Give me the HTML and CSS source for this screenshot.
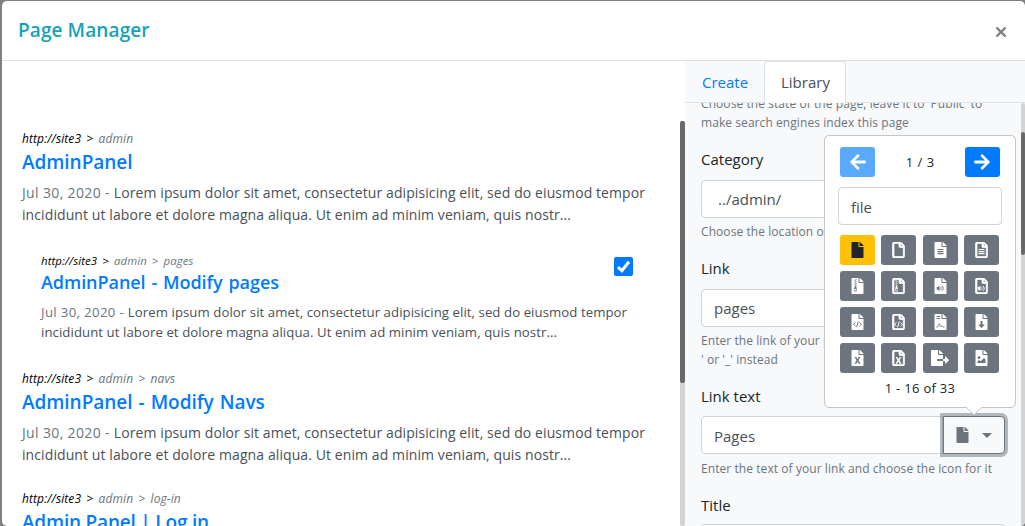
FILE: index.html
```html
<!DOCTYPE html>
<html lang="en">
<head>
<meta charset="utf-8">
<title>Page Manager</title>
<link rel="stylesheet" href="styles.css">
</head>
<body>
<svg class="defs" aria-hidden="true">
  <symbol id="file" viewBox="0 0 384 512"><path d="M224 136V0H24C10.7 0 0 10.7 0 24v464c0 13.3 10.7 24 24 24h336c13.3 0 24-10.7 24-24V160H248c-13.2 0-24-10.8-24-24zm160-14.1v6.1H256V0h6.1c6.4 0 12.5 2.5 17 7l97.9 98c4.5 4.5 7 10.6 7 16.9z"/></symbol>
  <symbol id="file-o" viewBox="0 0 384 512"><path class="bold" d="M369.9 97.9L286 14C277 5 264.8-.1 252.1-.1H48C21.5 0 0 21.5 0 48v416c0 26.5 21.5 48 48 48h288c26.5 0 48-21.5 48-48V131.9c0-12.7-5.1-25-14.1-34zM332.1 128H256V51.9l76.1 76.1zM48 464V48h160v104c0 13.3 10.7 24 24 24h112v288H48z"/></symbol>
  <symbol id="lines" viewBox="0 0 384 512"><path d="M96 220h192v38H96zM96 286h192v38H96zM96 352h192v38H96z"/></symbol>
  <symbol id="zip" viewBox="0 0 384 512"><path d="M128 32h32v32h-32zM96 64h32v32H96zM128 96h32v32h-32zM96 128h32v32H96zM128 160h32v32h-32zM96 192h32v32H96zM128 224h32v32h-32z"/><path fill-rule="evenodd" d="M105 256h44l22 100c9 44-14 76-43 76s-52-32-43-76zM128 352c-18 0-33 11-33 25s15 25 33 25 33-11 33-25-15-25-33-25z"/></symbol>
  <symbol id="audio" viewBox="0 0 384 512"><path d="M72 288h38l48-45v178l-48-45H72z"/><path class="stroke" d="M192 294c24 20 24 56 0 76M232 250c62 48 62 116 0 164"/></symbol>
  <symbol id="code" viewBox="0 0 384 512"><path class="stroke" d="M128 270l-64 60 64 60M256 270l64 60-64 60M218 238l-52 184"/></symbol>
  <symbol id="sign" viewBox="0 0 384 512"><path d="M64 64h112v32H64zM64 128h112v32H64z"/><path class="stroke" d="M64 416h32c24 0 32-96 58-96 22 0 22 80 44 80 18 0 22-24 42-8 20 28 44 24 80 24"/></symbol>
  <symbol id="down" viewBox="0 0 384 512"><path d="M160 224h64v112h76L192 444 84 336h76z"/></symbol>
  <symbol id="ex" viewBox="0 0 384 512"><path d="M96 224h58l38 70 38-70h58l-65 104 65 112h-58l-38-72-38 72H96l65-112z"/></symbol>
  <symbol id="picture" viewBox="0 0 384 512"><circle cx="112" cy="244" r="44"/><path d="M64 416v-56l48-40 48 40 112-108 48 52v112z"/></symbol>
  <symbol id="export" viewBox="0 0 576 512"><path d="M384 121.900c0-6.300-2.500-12.400-7-16.900L279.100 7c-4.500-4.500-10.600-7-17-7H256v128h128zM571 308l-95.700-96.400c-10.100-10.100-27.400-3-27.400 11.300V288h-64v64h64v65.200c0 14.300 17.300 21.400 27.400 11.300L571 332c6.600-6.600 6.600-17.400 0-24zm-379 28v-32c0-8.800 7.200-16 16-16h176V160H248c-13.200 0-24-10.800-24-24V0H24C10.700 0 0 10.700 0 24v464c0 13.300 10.700 24 24 24h336c13.300 0 24-10.700 24-24V352H208c-8.800 0-16-7.200-16-16z"/></symbol>
  <symbol id="arrow" viewBox="0 0 448 512"><path d="M257.500 445.100l-22.200 22.200c-9.400 9.400-24.600 9.400-33.900 0L7 273c-9.400-9.400-9.400-24.600 0-33.900L201.400 44.700c9.400-9.400 24.600-9.400 33.900 0l22.200 22.200c9.500 9.500 9.300 25-.4 34.300L136.600 216H424c13.300 0 24 10.700 24 24v32c0 13.300-10.700 24-24 24H136.600l120.500 114.800c9.800 9.300 10 24.800.4 34.300z"/></symbol>
</svg>

<div class="modal">
  <header class="modal-header"><h5>Page Manager</h5><button class="close" aria-label="Close"><svg viewBox="0 0 12 12"><path d="M1.500 1.500l9 9m0-9l-9 9"/></svg></button></header>
  <div class="modal-body">
    <main class="results">
      <div class="result-list">
        <article class="result">
          <cite>http://site3 &gt; <span>admin</span></cite>
          <h3>AdminPanel</h3>
          <p><span>Jul 30, 2020 - </span>Lorem ipsum dolor sit amet, consectetur adipisicing elit, sed do eiusmod tempor<br>incididunt ut labore et dolore magna aliqua. Ut enim ad minim veniam, quis nostr...</p>
        </article>
        <article class="result selected">
          <div>
            <cite>http://site3 &gt; <span>admin &gt; pages</span></cite>
            <h3>AdminPanel - Modify pages</h3>
            <p><span>Jul 30, 2020 - </span>Lorem ipsum dolor sit amet, consectetur adipisicing elit, sed do eiusmod tempor<br>incididunt ut labore et dolore magna aliqua. Ut enim ad minim veniam, quis nostr...</p>
          </div>
          <span class="check"><svg viewBox="0 0 19 19"><path d="M4 10l3.800 3.700L15 4.700"/></svg></span>
        </article>
        <article class="result">
          <cite>http://site3 &gt; <span>admin &gt; navs</span></cite>
          <h3>AdminPanel - Modify Navs</h3>
          <p><span>Jul 30, 2020 - </span>Lorem ipsum dolor sit amet, consectetur adipisicing elit, sed do eiusmod tempor<br>incididunt ut labore et dolore magna aliqua. Ut enim ad minim veniam, quis nostr...</p>
        </article>
        <article class="result last">
          <cite>http://site3 &gt; <span>admin &gt; log-in</span></cite>
          <h3>Admin Panel | Log in</h3>
        </article>
      </div>
      <div class="scroll"><i></i></div>
    </main>
    <aside class="side">
      <nav class="tabs"><a>Create</a><a class="active">Library</a></nav>
      <div class="side-body">
        <form class="form">
          <small class="first">Choose the state of the page, leave it to 'Public' to<br>make search engines index this page</small>
          <label>Category</label>
          <div class="field select">../admin/</div>
          <small>Choose the location of your page</small>
          <label>Link</label>
          <div class="field">pages</div>
          <small>Enter the link of your page, use '-<br>' or '_' instead</small>
          <label>Link text</label>
          <div class="group">
            <div class="field">Pages</div>
            <button type="button" class="picker"><svg class="icon"><use href="#file"/></svg><i class="caret"></i></button>
            <div class="popover">
              <div class="pager"><b class="off"><svg><use href="#arrow"/></svg></b><span>1 / 3</span><b><svg class="flip"><use href="#arrow"/></svg></b></div>
              <div class="field search">file</div>
              <div class="icons">
                <b class="on"><svg class="icon"><use href="#file"/></svg></b>
                <b><svg class="icon"><use href="#file-o"/></svg></b>
                <b><svg class="icon"><use href="#file"/><use class="cut" href="#lines"/></svg></b>
                <b><svg class="icon"><use href="#file-o"/><use href="#lines"/></svg></b>
                <b><svg class="icon"><use href="#file"/><use class="cut" href="#zip"/></svg></b>
                <b><svg class="icon"><use href="#file-o"/><use href="#zip"/></svg></b>
                <b><svg class="icon"><use href="#file"/><use class="cut" href="#audio"/></svg></b>
                <b><svg class="icon"><use href="#file-o"/><use href="#audio"/></svg></b>
                <b><svg class="icon"><use href="#file"/><use class="cut" href="#code"/></svg></b>
                <b><svg class="icon"><use href="#file-o"/><use href="#code"/></svg></b>
                <b><svg class="icon"><use href="#file"/><use class="cut" href="#sign"/></svg></b>
                <b><svg class="icon"><use href="#file"/><use class="cut" href="#down"/></svg></b>
                <b><svg class="icon"><use href="#file"/><use class="cut" href="#ex"/></svg></b>
                <b><svg class="icon"><use href="#file-o"/><use href="#ex"/></svg></b>
                <b><svg class="icon wide"><use href="#export"/></svg></b>
                <b><svg class="icon"><use href="#file"/><use class="cut" href="#picture"/></svg></b>
              </div>
              <div class="count">1 - 16 of 33</div>
              <svg class="tip" viewBox="0 0 16 9"><path d="M0 0l8 8 8-8"/></svg>
            </div>
          </div>
          <small class="roomy">Enter the text of your link and choose the icon for it</small>
          <label>Title</label>
          <div class="field title"></div>
        </form>
        <div class="scroll"><i></i></div>
      </div>
    </aside>
  </div>
</div>
</body>
</html>
```
FILE: styles.css
```css
* { box-sizing: border-box; }
body { margin: 0; height: 526px; overflow: hidden; background: #808080; padding: 1px 0 0 2px; font: 15px/24px "Open Sans", "Noto Sans", sans-serif; color: #212529; }
h3, h5, p { margin: 0; }
button { padding: 0; font: inherit; }
svg { display: block; fill: currentColor; }
.defs { position: absolute; width: 0; height: 0; }
.stroke { fill: none; stroke: currentColor; stroke-width: 32; }
.bold { stroke: currentColor; stroke-width: 22; }

.modal { display: flex; flex-direction: column; height: 525px; background: #fff; border-radius: 5px; overflow: hidden; }
.modal-header { flex: none; height: 60px; display: flex; justify-content: space-between; align-items: center; padding: 0 18px 0 16px; border-bottom: 1px solid #dee2e6; }
.modal-header h5 { font-size: 19px; font-weight: 600; color: #17a2b8; line-height: 30px; letter-spacing: .1px; padding-bottom: 2px; }
.close { border: 0; background: none; color: #7f7f7f; padding-top: 3px; }
.close svg { width: 12px; height: 12px; fill: none; stroke: currentColor; stroke-width: 2.400; }
.modal-body { flex: 1; min-height: 0; display: flex; }

.results { width: 683px; display: flex; justify-content: space-between; padding-top: 60px; }
.result-list { flex: 1; padding: 8px 0 0 20px; height: 405px; overflow: hidden; }
.result { height: 120px; white-space: nowrap; }
.result cite { display: block; font: italic 12px/19px "Open Sans", sans-serif; letter-spacing: .1px; word-spacing: 2px; color: #000; }
.result cite span, .result p span { color: #6c757d; }
.result h3 { font-size: 19px; font-weight: 600; line-height: 24px; margin-top: 2px; word-spacing: 1.200px; letter-spacing: -.05px; color: #007bff; }
.result.last h3 { word-spacing: 0; letter-spacing: -.2px; }
.result p { font-size: 14px; line-height: 22px; margin-top: 8px; letter-spacing: .09px; color: #495057; }
.result p span { letter-spacing: .35px; }
.selected { display: flex; justify-content: space-between; padding: 3px 47px 0 19px; }
.selected cite { font-size: 11.400px; line-height: 18px; }
.selected h3 { font-size: 18px; margin-top: 0; }
.result.selected p { font-size: 13.200px; line-height: 20px; margin-top: 8px; letter-spacing: .07px; }
.check { flex: none; width: 19px; height: 19px; margin-top: 5px; background: #007bff; border-radius: 2px; }
.selected > div { min-width: 0; }
.check svg { fill: none; stroke: #fff; stroke-width: 3; }
.scroll { width: 5px; background: #d3d3d3; border-radius: 2px; }
.scroll i { display: block; width: 5px; height: 262px; background: #696969; border-radius: 2px; }

.side { flex: 1; min-width: 0; background: #f8f9fa; display: flex; flex-direction: column; }
.tabs { flex: none; display: flex; height: 42px; border-bottom: 1px solid #dee2e6; line-height: 42px; color: #007bff; }
.tabs a { height: 42px; width: 79px; padding-left: 17px; }
.tabs .active { width: 82px; background: #fff; color: #495057; border: 1px solid #dee2e6; border-bottom: 0; border-radius: 4px 4px 0 0; line-height: 40px; padding-left: 16px; }
.side-body { flex: 1; min-height: 0; display: flex; justify-content: space-between; overflow: hidden; }
.form { width: 320px; height: 423px; padding: 0 0 0 16px; }
.side-body .scroll { width: 4px; padding-top: 29px; }
.side-body .scroll i { width: 4px; height: 123px; }
.form small { display: block; font-size: 12px; line-height: 19px; letter-spacing: .07px; color: #6c757d; margin-top: 4px; white-space: nowrap; }
.form .first { margin-top: -9px; }
.form .roomy { margin-top: 5px; }
.form label { display: block; margin: 15px 0 9px; line-height: 24px; }
.field { height: 38px; width: 304px; border: 1px solid #ced4da; border-radius: 4px; padding: 0 12px; background: #fff; color: #495057; line-height: 37px; }
.select { padding-left: 16px; }
.title { margin-top: -2px; }
.group { display: flex; position: relative; margin-top: -1px; }
.group .field { line-height: 39px; }
.group > .field { width: 242px; border-radius: 4px 0 0 4px; }
.picker { width: 62px; height: 38px; display: flex; align-items: center; gap: 13px; padding-left: 12px; border: 1px solid #6c757d; border-radius: 0 4px 4px 0; background: #f8f9fa; color: #6c757d; box-shadow: 0 0 0 3px rgba(108,117,125,.5); }
.caret { border: 5px solid transparent; border-top-color: currentColor; border-bottom: 0; }

.popover { position: absolute; left: 123px; bottom: 46px; width: 192px; height: 273px; border: 1px solid #c4c5c6; border-radius: 5px; background: #fff; padding: 11px 13px; }
.popover b { width: 35px; height: 30px; display: flex; align-items: center; justify-content: center; background: #6c757d; color: #fff; border-radius: 3px; }
.pager { display: flex; justify-content: space-between; align-items: center; padding: 0 2px; font-size: 13px; word-spacing: 1px; }
.popover .pager b { background: #007bff; }
.popover .pager .off { background: #59a9ff; }
.pager svg { width: 16px; height: 18px; }
.flip { transform: scaleX(-1); }
.popover .search { width: 164px; margin: 10px 0; }
.icons { display: grid; grid-template-columns: repeat(4, 35px); justify-content: space-between; gap: 6px 0; padding: 0 3px 0 2px; }
.icon { width: 12px; height: 16px; overflow: visible; }
.popover .icon, .picker .icon { width: 13px; }
.popover .wide { width: 18px; }
.cut { color: #6c757d; fill: #6c757d; }
.popover .on { background: #ffc107; color: #212529; }
.count { text-align: center; font-size: 13px; line-height: 30px; letter-spacing: .3px; }
.tip { position: absolute; left: 141px; top: 271px; width: 16px; height: 9px; fill: #fff; stroke: #c4c5c6; }
```
